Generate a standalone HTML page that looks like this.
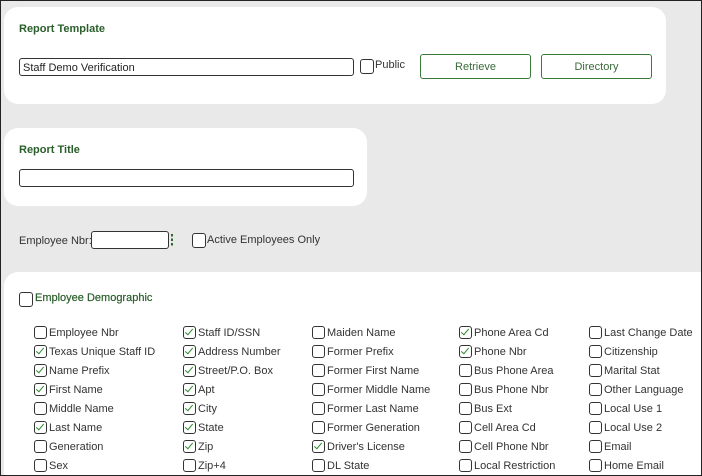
<!DOCTYPE html><html><head><style>
html,body{margin:0;width:702px;height:476px;overflow:hidden;font-family:"Liberation Sans",sans-serif;}
.f{position:absolute;left:0;top:0;width:700px;height:474px;border:1px solid #222;background:#e9e9e9;overflow:hidden}
.p{position:absolute;background:#fff;border-radius:14px}
.a{position:absolute;white-space:nowrap}
.h{color:#2a5e2a;font-size:11px;font-weight:bold}
.in{position:absolute;border:1.5px solid #333;border-radius:3px;background:#fff;box-sizing:border-box}
.cb{position:absolute;width:13px;height:13px;border:1.5px solid #333;border-radius:3px;box-sizing:border-box;background:#fff}
.cb.c::after{content:"";position:absolute;left:3px;top:0px;width:3px;height:7px;border:solid #2a8a2a;border-width:0 1.5px 1.5px 0;transform:rotate(40deg)}
.l{position:absolute;font-size:11px;color:#333;white-space:nowrap}
.btn{position:absolute;border:1.5px solid #3a7a3a;border-radius:3px;color:#3a6a3a;font-size:11px;text-align:center;box-sizing:border-box;line-height:24px}
</style></head><body><div class="f">
<div class="p" style="left:3px;top:6px;width:662px;height:97px"></div>
<div class="a h" style="left:18px;top:22px">Report Template</div>
<div class="in" style="left:18px;top:57px;width:335px;height:18px"></div>
<div class="l" style="left:22px;top:61px;color:#222">Staff Demo Verification</div>
<div class="cb" style="left:359px;top:58px;width:14px;height:15px"></div>
<div class="l" style="left:374px;top:58px">Public</div>
<div class="btn" style="left:419px;top:53px;width:111px;height:25px">Retrieve</div>
<div class="btn" style="left:540px;top:53px;width:111px;height:25px">Directory</div>
<div class="p" style="left:3px;top:127px;width:363px;height:78px"></div>
<div class="a h" style="left:18px;top:143px">Report Title</div>
<div class="in" style="left:18px;top:168px;width:335px;height:18px"></div>
<div class="l" style="left:18px;top:234px">Employee Nbr:</div>
<div class="in" style="left:90px;top:230px;width:78px;height:18px"></div>
<div class="a" style="left:170px;top:233px;width:2px;height:12px;background:repeating-linear-gradient(#2a6a2a 0 2.5px,transparent 2.5px 4.5px)"></div>
<div class="cb" style="left:191px;top:232px;width:14px;height:15px"></div>
<div class="l" style="left:206px;top:233px">Active Employees Only</div>
<div class="p" style="left:3px;top:271px;width:710px;height:203px;border-radius:14px 0 0 0"></div>
<div class="cb" style="left:18px;top:291px;width:14px;height:15px"></div>
<div class="a h" style="left:34px;top:291px;font-weight:normal;-webkit-text-stroke:0.2px #2a5e2a">Employee Demographic</div>
<div id="g"></div>
</div>
<script>
var cols=[33,182,311,458,588];
var d=[
[["Employee Nbr",0],["Texas Unique Staff ID",1],["Name Prefix",1],["First Name",1],["Middle Name",0],["Last Name",1],["Generation",0],["Sex",0]],
[["Staff ID/SSN",1],["Address Number",1],["Street/P.O. Box",1],["Apt",1],["City",1],["State",1],["Zip",1],["Zip+4",0]],
[["Maiden Name",0],["Former Prefix",0],["Former First Name",0],["Former Middle Name",0],["Former Last Name",0],["Former Generation",0],["Driver's License",1],["DL State",0]],
[["Phone Area Cd",1],["Phone Nbr",1],["Bus Phone Area",0],["Bus Phone Nbr",0],["Bus Ext",0],["Cell Area Cd",0],["Cell Phone Nbr",0],["Local Restriction",0]],
[["Last Change Date",0],["Citizenship",0],["Marital Stat",0],["Other Language",0],["Local Use 1",0],["Local Use 2",0],["Email",0],["Home Email",0]]];
var h="";
d.forEach(function(c,i){c.forEach(function(r,j){var y=325+j*19;
h+='<div class="cb'+(r[1]?' c':'')+'" style="left:'+cols[i]+'px;top:'+y+'px"></div><div class="l" style="left:'+(cols[i]+15)+'px;top:'+(y+1)+'px">'+r[0]+'</div>';});});
document.getElementById('g').outerHTML=h;
</script>
</body></html>
